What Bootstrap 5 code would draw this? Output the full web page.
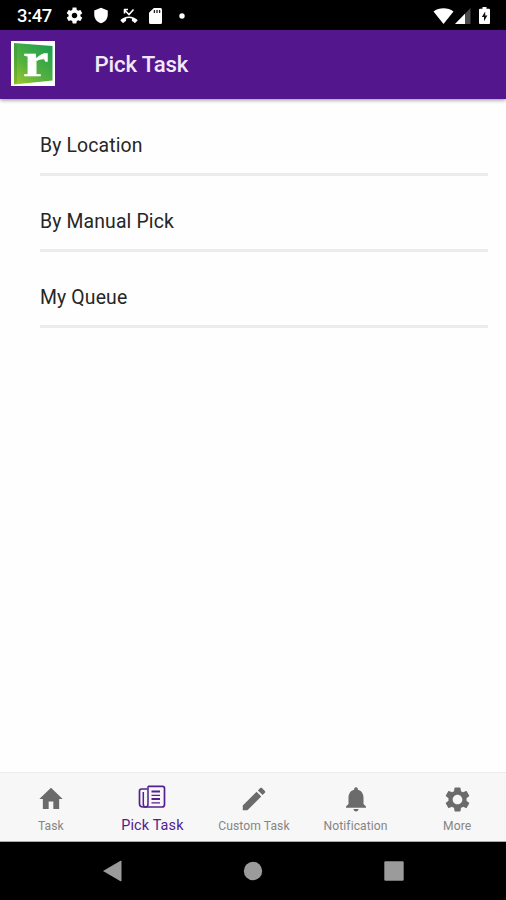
<!DOCTYPE html>
<html lang="en">
<head>
<meta charset="utf-8">
<meta name="viewport" content="width=device-width, initial-scale=1">
<title>Pick Task</title>
<link href="https://cdn.jsdelivr.net/npm/bootstrap@5.3.0/dist/css/bootstrap.min.css" rel="stylesheet">
<style>
  body { font-family: Roboto, "Liberation Sans", sans-serif; background: #fefefe; }
  svg { display: block; flex: none; }
  .status-bar { height: 30px; background: #000; color: #fff; padding: 1px 15px 0 17px; }
  .clock { font-size: 18.4px; font-weight: 500; line-height: 28px; width: 48px; white-space: nowrap; letter-spacing: -.3px; }
  .app-bar { height: 69px; background: #53168d; padding: 0 11px; box-shadow: 0 1px 4px rgba(0,0,0,.45); }
  .app-title { font-size: 22.2px; font-weight: 500; color: #f1e9fa; margin: -2px 0 0 38.5px; line-height: 30px; letter-spacing: -.15px; }
  .task-list { padding: 0 18px 0 40px; margin-top: 1px; }
  .task-item { height: 76px; border-bottom: 3px solid #ececec; padding: 0 0 13px; font-size: 19.4px; line-height: 28px; color: #262626; letter-spacing: .14px; }
  .tab-bar { height: 70px; background: #f7f7f7; border-top: 1px solid #ececec; border-bottom: 1px solid #aaa; color: #6b6b6b; }
  .tab-bar .row { margin-right: -2px; }
  .tab-icon { height: 30px; margin-top: 11px; }
  .tab-text { font-size: 12.1px; line-height: 16px; margin-top: 4px; color: #858585; letter-spacing: .08px; white-space: nowrap; }
  .tab-on { color: #53208f; }
  .tab-on .tab-text { color: #53208f; font-size: 14.4px; letter-spacing: .15px; }
  .system-bar { height: 58px; background: #000; padding: 0 102px; color: #9b9b9b; }
</style>
</head>
<body>
<div class="d-flex flex-column vh-100 overflow-hidden">
  <div class="status-bar d-flex align-items-center justify-content-between">
    <div class="d-flex align-items-center">
      <span class="clock">3:47</span>
      <svg width="19" height="19" viewBox="0 0 24 24" fill="currentColor"><path d="M19.43 12.98c.04-.32.07-.64.07-.98s-.03-.66-.07-.98l2.11-1.65c.19-.15.24-.42.12-.64l-2-3.46c-.12-.22-.39-.3-.61-.22l-2.49 1c-.52-.4-1.08-.73-1.69-.98l-.38-2.65C14.46 2.18 14.25 2 14 2h-4c-.25 0-.46.18-.49.42l-.38 2.65c-.61.25-1.17.59-1.69.98l-2.49-1c-.23-.09-.49 0-.61.22l-2 3.46c-.13.22-.07.49.12.64l2.11 1.65c-.04.32-.07.65-.07.98s.03.66.07.98l-2.11 1.65c-.19.15-.24.42-.12.64l2 3.46c.12.22.39.3.61.22l2.49-1c.52.4 1.08.73 1.69.98l.38 2.65c.03.24.24.42.49.42h4c.25 0 .46-.18.49-.42l.38-2.65c.61-.25 1.17-.59 1.69-.98l2.49 1c.23.09.49 0 .61-.22l2-3.46c.12-.22.07-.49-.12-.64l-2.11-1.65zM12 15.500c-1.930 0-3.500-1.570-3.500-3.500s1.570-3.500 3.500-3.500 3.500 1.570 3.500 3.500-1.570 3.500-3.500 3.500z"/></svg>
      <svg class="ms-2" width="18" height="17" viewBox="0 0 24 24" preserveAspectRatio="none" fill="currentColor"><path d="M12 1 3 5v6c0 5.550 3.840 10.740 9 12 5.160-1.260 9-6.450 9-12V5l-9-4z"/></svg>
      <svg style="margin-left:10px" width="18" height="16" viewBox="0 0 18 16"><path d="M4.500 1v4.500M4 1.500h4M4.500 2l4.500 4.500 4.500-5" fill="none" stroke="#fff" stroke-width="1.600"/><path d="M9 8.500c-3.400 0-6.200 1.300-8.300 3.300-.3.300-.3.700 0 1l1.900 1.900c.3.300.7.300 1 0 .6-.6 1.300-1.100 2-1.400.4-.2.500-.4.500-.8v-2a11 11 0 0 1 5.800 0v2c0 .4.100.6.500.8.700.3 1.400.8 2 1.400.3.300.7.300 1 0l1.900-1.900c.3-.3.300-.7 0-1C15.200 9.800 12.400 8.500 9 8.500z" fill="#fff"/></svg>
      <svg style="margin-left:11px" width="13" height="16" viewBox="0 0 13 16"><path d="M4.800 0H11.500Q13 0 13 1.500V14.500Q13 16 11.500 16H1.500Q0 16 0 14.500V4.800z" fill="#fff"/><path d="M5.400 2v3M8 2v3M10.600 2v3" stroke="#222" stroke-width="1.300"/></svg>
      <svg style="margin-left:17px" width="6" height="6" viewBox="0 0 6 6"><circle cx="3" cy="3" r="2.700" fill="#fff"/></svg>
    </div>
    <div class="d-flex align-items-center">
      <svg width="21" height="16" viewBox="0 0 21 16"><path d="M10.500 16 .5 3.500C6-.9 15-.9 20.500 3.500z" fill="#fff"/></svg>
      <svg width="17" height="16" viewBox="0 0 17 16"><path d="M1 16 16.500 0V16z" fill="#4b4b4b"/><path d="M1 16 11 5.700V16z" fill="#fff"/></svg>
      <svg style="margin-left:8px;margin-right:1px" width="11" height="17" viewBox="0 0 11 17"><path d="M3.500 0h4v1.800H10q1 0 1 1V16q0 1-1 1H1q-1 0-1-1V2.800q0-1 1-1h2.500z" fill="#fff"/><path d="M6.200 4.500 2.800 10H5v4.200L8.400 8.500H6.200z" fill="#111"/></svg>
    </div>
  </div>

  <header class="app-bar d-flex align-items-center flex-shrink-0">
    <svg style="margin-top:-3px" width="45" height="45" viewBox="0 0 45 45" overflow="visible">
      <defs><linearGradient id="leaf" x1="0" y1="1" x2=".75" y2="0"><stop offset="0" stop-color="#a5ca2b"/><stop offset=".45" stop-color="#55b13e"/><stop offset="1" stop-color="#22a04f"/></linearGradient></defs>
      <rect width="44" height="45" fill="#fff"/>
      <path d="M3 2 41.500 5V39.500L3 43.500z" fill="url(#leaf)"/>
      <path d="M3 2 6 5V41L3 43.500z" fill="#287c2c" opacity=".25"/>
      <text x="12" y="34.500" font-family="Liberation Serif, serif" font-weight="700" font-size="49" textLength="25.500" lengthAdjust="spacingAndGlyphs" fill="#fff" stroke="#fff" stroke-width=".5">r</text>
    </svg>
    <h1 class="app-title">Pick Task</h1>
  </header>

  <main class="flex-grow-1">
    <div class="task-list">
      <div class="task-item d-flex align-items-end">By Location</div>
      <div class="task-item d-flex align-items-end">By Manual Pick</div>
      <div class="task-item d-flex align-items-end">My Queue</div>
    </div>
  </main>

  <nav class="tab-bar flex-shrink-0">
    <div class="row g-0 text-center">
      <div class="col d-flex flex-column align-items-center">
        <div class="tab-icon d-flex align-items-center"><svg width="28" height="30" viewBox="0 0 24 24" preserveAspectRatio="none" fill="currentColor"><path d="M10 20v-6h4v6h5v-8h3L12 3 2 12h3v8z"/></svg></div>
        <div class="tab-text">Task</div>
      </div>
      <div class="col d-flex flex-column align-items-center tab-on">
        <div class="tab-icon"><svg width="28" height="26" viewBox="0 0 28 26" fill="none" stroke="currentColor" stroke-width="1.700"><path d="M10 2.300H24.500Q26.500 2.300 26.500 4.300V20.500Q26.500 23 24 23H5Q1.500 23 1.500 19.500V7Q1.500 5 3.500 5H9.500"/><path d="M10 2.300V20Q10 23 7.500 23 5.300 23 5.300 20V8" stroke-width="1.500"/><path d="M13.500 7.500H22M13.500 15H22" stroke-width="2.200"/><path d="M13.500 11.300H22M13.500 18.800H22" stroke-width="1.200"/></svg></div>
        <div class="tab-text">Pick Task</div>
      </div>
      <div class="col d-flex flex-column align-items-center">
        <div class="tab-icon d-flex align-items-center"><svg width="30" height="30" viewBox="0 0 24 24" fill="currentColor"><path d="M3 17.250V21h3.750L17.810 9.940l-3.750-3.750L3 17.250zM20.710 7.040c.39-.39.39-1.020 0-1.410l-2.340-2.340c-.39-.39-1.020-.39-1.410 0l-1.830 1.830 3.750 3.750 1.830-1.830z"/></svg></div>
        <div class="tab-text">Custom Task</div>
      </div>
      <div class="col d-flex flex-column align-items-center">
        <div class="tab-icon d-flex align-items-center"><svg width="30" height="30" viewBox="0 0 24 24" fill="currentColor"><path d="M12 22c1.100 0 2-.9 2-2h-4c0 1.100.89 2 2 2zm6-6v-5c0-3.070-1.640-5.640-4.500-6.320V4c0-.83-.67-1.500-1.500-1.500s-1.500.67-1.500 1.500v.68C7.630 5.360 6 7.920 6 11v5l-2 2v1h16v-1l-2-2z"/></svg></div>
        <div class="tab-text">Notification</div>
      </div>
      <div class="col d-flex flex-column align-items-center">
        <div class="tab-icon d-flex align-items-center"><svg width="29" height="29" viewBox="0 0 24 24" fill="currentColor"><path d="M19.430 12.980c.04-.32.07-.64.07-.98s-.03-.66-.07-.98l2.110-1.650c.19-.15.24-.42.12-.64l-2-3.460c-.12-.22-.39-.3-.61-.22l-2.490 1c-.52-.4-1.080-.73-1.690-.98l-.38-2.650C14.460 2.180 14.250 2 14 2h-4c-.25 0-.46.18-.49.42l-.38 2.650c-.61.25-1.170.59-1.690.98l-2.490-1c-.23-.09-.49 0-.61.22l-2 3.460c-.13.22-.07.49.12.64l2.110 1.650c-.04.32-.07.65-.07.98s.03.66.07.98l-2.110 1.650c-.19.15-.24.42-.12.64l2 3.460c.12.22.39.3.61.22l2.490-1c.52.4 1.080.73 1.690.98l.38 2.650c.03.24.24.42.49.42h4c.25 0 .46-.18.49-.42l.38-2.650c.61-.25 1.170-.59 1.690-.98l2.490 1c.23.09.49 0 .61-.22l2-3.460c.12-.22.07-.49-.12-.64l-2.110-1.650zM12 16c-2.200 0-4-1.800-4-4s1.800-4 4-4 4 1.800 4 4-1.800 4-4 4z"/></svg></div>
        <div class="tab-text">More</div>
      </div>
    </div>
  </nav>

  <div class="system-bar d-flex align-items-center justify-content-between flex-shrink-0">
    <svg width="20" height="22" viewBox="0 0 20 22" fill="currentColor"><path d="M1 11 18.500.8q1-.4 1 .7v19q0 1.100-1 .7z"/></svg>
    <svg width="20" height="20" viewBox="0 0 20 20" fill="currentColor"><circle cx="10" cy="10" r="9.200"/></svg>
    <svg width="20" height="20" viewBox="0 0 20 20" fill="currentColor"><rect x=".3" y=".3" width="19.400" height="19.400" rx="1.200"/></svg>
  </div>
</div>
<script src="https://cdn.jsdelivr.net/npm/bootstrap@5.3.0/dist/js/bootstrap.bundle.min.js"></script>
</body>
</html>
